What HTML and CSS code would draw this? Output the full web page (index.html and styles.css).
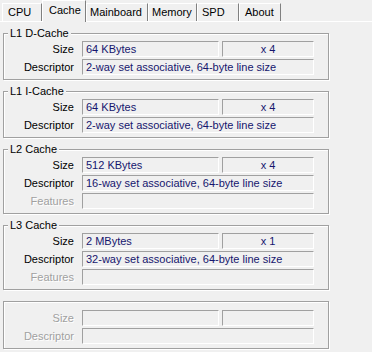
FILE: index.html
```html
<!DOCTYPE html>
<html lang="en">

<head>
    <meta charset="UTF-8">
    <title>CPU-Z Cache</title>
    <link rel="stylesheet" href="styles.css">
</head>

<body>
    <div class="tabs">
        <div class="tab tab-cpu">CPU</div>
        <div class="tab tab-cache active">Cache</div>
        <div class="tab tab-mainboard">Mainboard</div>
        <div class="tab tab-memory">Memory</div>
        <div class="tab tab-spd">SPD</div>
        <div class="tab tab-about">About</div>
    </div>

    <div class="panel">
        <div class="group">
            <div class="group-title">L1 D-Cache</div>
            <div class="row">
                <span class="label">Size</span>
                <span class="field size">64 KBytes</span>
                <span class="field count">x 4</span>
            </div>
            <div class="row">
                <span class="label">Descriptor</span>
                <span class="field wide">2-way set associative, 64-byte line size</span>
            </div>
        </div>

        <div class="group">
            <div class="group-title">L1 I-Cache</div>
            <div class="row">
                <span class="label">Size</span>
                <span class="field size">64 KBytes</span>
                <span class="field count">x 4</span>
            </div>
            <div class="row">
                <span class="label">Descriptor</span>
                <span class="field wide">2-way set associative, 64-byte line size</span>
            </div>
        </div>

        <div class="group">
            <div class="group-title">L2 Cache</div>
            <div class="row">
                <span class="label">Size</span>
                <span class="field size">512 KBytes</span>
                <span class="field count">x 4</span>
            </div>
            <div class="row">
                <span class="label">Descriptor</span>
                <span class="field wide">16-way set associative, 64-byte line size</span>
            </div>
            <div class="row">
                <span class="label disabled">Features</span>
                <span class="field wide"></span>
            </div>
        </div>

        <div class="group">
            <div class="group-title">L3 Cache</div>
            <div class="row">
                <span class="label">Size</span>
                <span class="field size">2 MBytes</span>
                <span class="field count">x 1</span>
            </div>
            <div class="row">
                <span class="label">Descriptor</span>
                <span class="field wide">32-way set associative, 64-byte line size</span>
            </div>
            <div class="row">
                <span class="label disabled">Features</span>
                <span class="field wide"></span>
            </div>
        </div>

        <div class="group untitled">
            <div class="row">
                <span class="label disabled">Size</span>
                <span class="field size"></span>
                <span class="field count"></span>
            </div>
            <div class="row">
                <span class="label disabled">Descriptor</span>
                <span class="field wide"></span>
            </div>
        </div>
    </div>
</body>

</html>
```

FILE: styles.css
```css
body {
    margin: 0;
    width: 372px;
    height: 352px;
    overflow: hidden;
    background: #f0f0f0;
    font-family: 'Liberation Sans', Arial, sans-serif;
    font-size: 11px;
    color: #000;
}

.tabs {
    display: flex;
    align-items: flex-end;
    height: 21px;
    padding-left: 2px;
    border-bottom: 1px solid #fff;
}

.tab {
    box-sizing: border-box;
    height: 18px;
    line-height: 17px;
    padding-left: 5px;
    border-left: 1px solid #fff;
    border-top: 1px solid #fff;
    border-right: 1px solid #808080;
}

.tab.active {
    position: relative;
    z-index: 1;
    height: 22px;
    margin-bottom: -1px;
    padding-top: 2px;
    line-height: 14px;
    background: #f0f0f0;
}

.tab-cpu { width: 40px; }
.tab-cache { width: 44px; padding-left: 6px; }
.tab-mainboard { width: 62px; padding-left: 3px; }
.tab-memory { width: 49px; padding-left: 3px; }
.tab-spd { width: 42px; padding-left: 4px; }
.tab-about { width: 42px; padding-left: 5px; }

.panel {
    padding: 11px 0 0 3px;
}

.group {
    box-sizing: border-box;
    width: 326px;
    margin-bottom: 11px;
    padding-bottom: 4px;
    border: 1px solid #a0a0a0;
    box-shadow: inset 1px 1px #fff, 1px 1px #fff;
}

.group-title {
    width: fit-content;
    margin: -7px 0 0 4px;
    padding: 0 2px;
    line-height: 13px;
    background: #f0f0f0;
}

.row {
    display: flex;
    height: 16px;
    margin-top: 2px;
}

.group-title + .row {
    margin-top: 1px;
}

.untitled .row:first-child {
    margin-top: 8px;
}

.label {
    width: 70px;
    margin-right: 8px;
    text-align: right;
    line-height: 16px;
}

.label.disabled {
    color: #a0a0a0;
    text-shadow: 1px 1px #fff;
}

.field {
    box-sizing: border-box;
    height: 16px;
    padding-left: 3px;
    line-height: 14px;
    border: 1px solid;
    border-color: #a0a0a0 #fff #fff #a0a0a0;
    color: #16166e;
    white-space: nowrap;
    overflow: hidden;
}

.size { width: 137px; }

.count {
    width: 92px;
    margin-left: 3px;
    padding-left: 0;
    text-align: center;
}

.wide { width: 232px; }
```
